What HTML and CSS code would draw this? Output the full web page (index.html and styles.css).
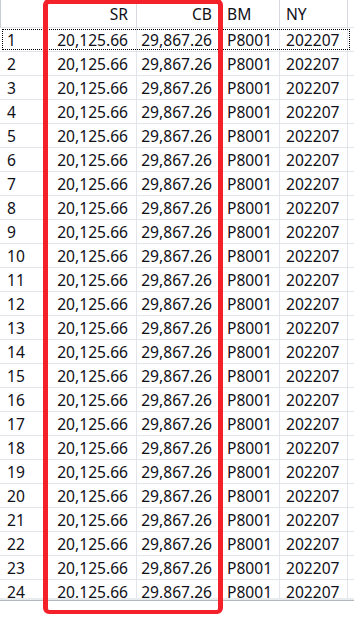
FILE: index.html
```html
<!DOCTYPE html>
<html>
<head>
<meta charset="utf-8">
<link rel="stylesheet" href="styles.css">
</head>
<body>
<div class="wrap">
  <div class="sheet">
    <div class="row head">
      <div class="c rn first"></div>
      <div class="c num">SR</div>
      <div class="c num">CB</div>
      <div class="c txt">BM</div>
      <div class="c txt">NY</div>
      <div class="c fill"></div>
    </div>
    <div id="rows"></div>
  </div>
  <div class="edge"></div>
  <div class="hscroll"></div>
  <div class="mark"></div>
</div>
<script>
var rows = document.getElementById('rows');
var html = '';
for (var i = 1; i <= 24; i++) {
  html += '<div class="row' + (i === 1 ? ' sel' : '') + '">' +
    '<div class="c rn">' + i + '</div>' +
    '<div class="c num">20,125.66</div>' +
    '<div class="c num">29,867.26</div>' +
    '<div class="c txt">P8001</div>' +
    '<div class="c txt">202207</div>' +
    '<div class="c fill"></div></div>';
}
rows.innerHTML = html;
</script>
</body>
</html>
```
FILE: styles.css
```css
html, body {
  margin: 0;
  padding: 0;
  background: #fff;
}
body {
  width: 354px;
  height: 617px;
  overflow: hidden;
  font-family: "Noto Sans", "Open Sans", sans-serif;
  font-size: 15.6px;
  color: #101018;
}
.wrap {
  position: relative;
  height: 617px;
}
.sheet {
  height: 598px;
  overflow: hidden;
}
.edge {
  height: 2px;
  background: #e9ecef;
  border-bottom: 1px solid #b3b8bf;
}
.row {
  position: relative;
  display: grid;
  grid-template-columns: 47px 90px 84px 59px 68px 1fr;
  height: 24px;
}
.row.head {
  height: 28px;
}
.c {
  box-sizing: border-box;
  border-right: 1px solid #e2e5e9;
  border-bottom: 1px solid #e2e5e9;
  display: flex;
  align-items: center;
  white-space: nowrap;
  overflow: hidden;
}
.head .c {
  border-right-color: #d6dadf;
}
.c.first {
  border-left: 1px solid #c9ced4;
}
.c.rn {
  padding-left: 7px;
}
.c.num {
  justify-content: flex-end;
  padding-right: 8px;
}
.c.txt {
  padding-left: 6px;
}
.c.fill {
  border-right: none;
}
.row.sel::after {
  content: "";
  position: absolute;
  left: 2px;
  width: 346px;
  top: 1px;
  bottom: 2px;
  border: 1px dotted #000;
  pointer-events: none;
}
.mark {
  position: absolute;
  left: 43px;
  top: -1px;
  width: 180px;
  height: 615px;
  box-sizing: border-box;
  border: 5px solid #f4202a;
  border-bottom-width: 4px;
  border-radius: 6px;
  pointer-events: none;
}
.hscroll {
  height: 14px;
  background: #fff;
}
```
